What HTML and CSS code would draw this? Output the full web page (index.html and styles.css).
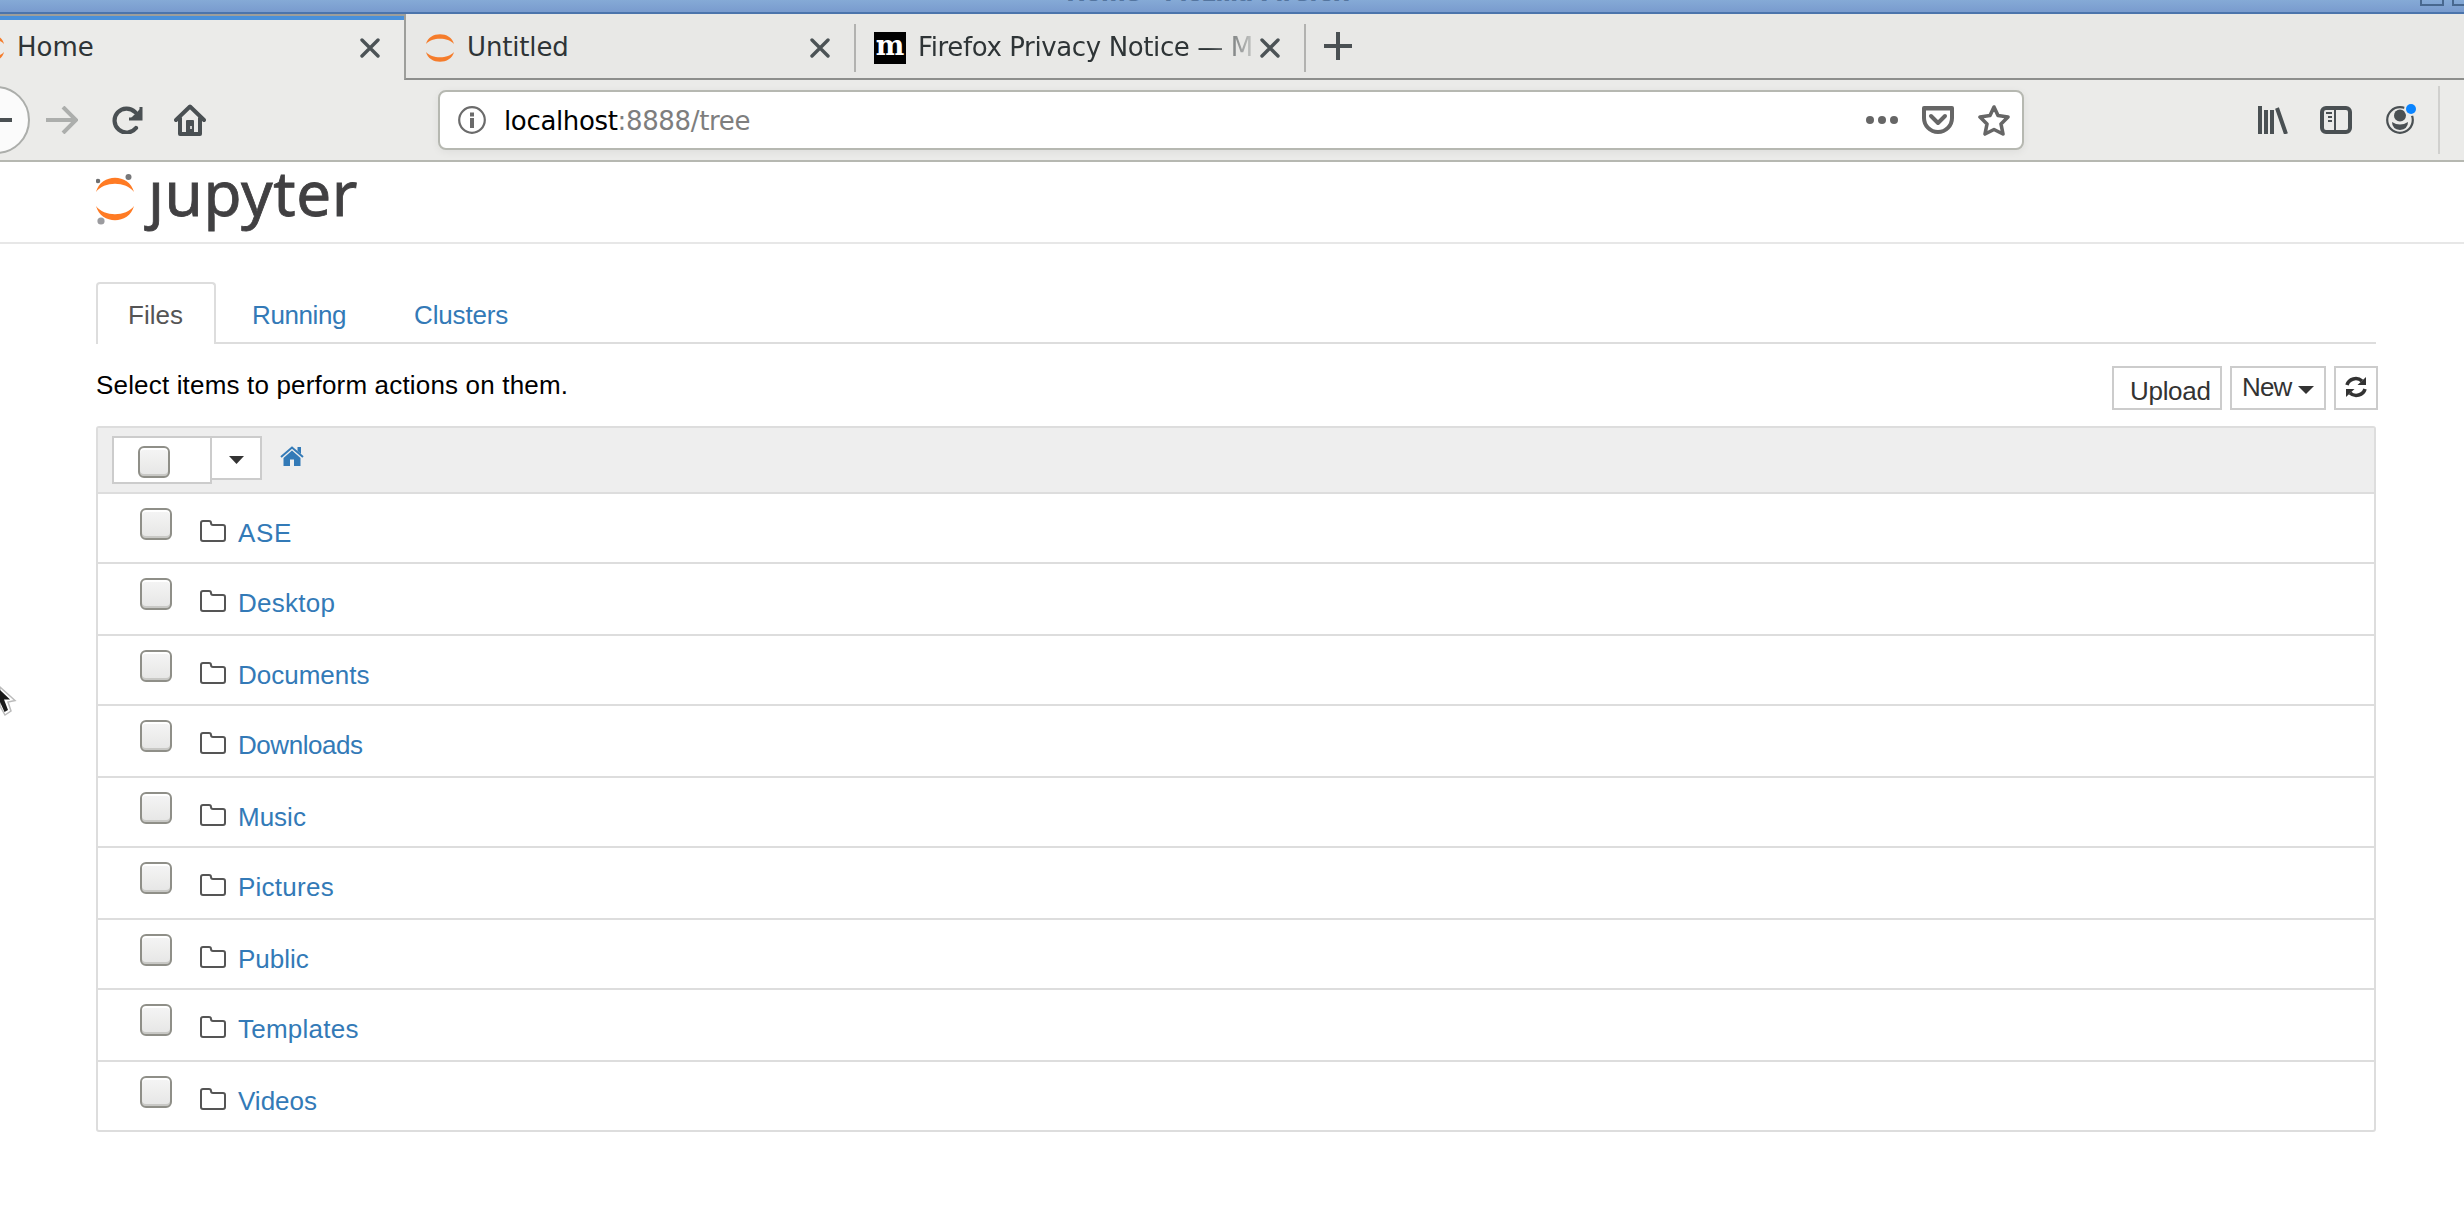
FILE: index.html
```
<!DOCTYPE html>
<html lang="en">
<head>
<meta charset="utf-8">
<title>Home</title>
<link rel="stylesheet" href="styles.css">
</head>
<body>
<svg class="defs" width="0" height="0" aria-hidden="true">
  <symbol id="close" viewBox="0 0 20 20"><path d="M2 2L18 18M18 2L2 18" fill="none" stroke="#4c5356" stroke-width="3.4" stroke-linecap="round"/></symbol>
  <symbol id="planet" viewBox="0 0 28 28"><path d="M0 10C3-3 25-3 28 10C22 3 6 3 0 10ZM0 18C3 31 25 31 28 18C22 25 6 25 0 18Z" fill="#f57c2b"/></symbol>
  <symbol id="folder" viewBox="0 0 26 22"><path d="M1 3Q1 1 3 1H9Q11 1 11 3Q11 5 13 5H23Q25 5 25 7V19Q25 21 23 21H3Q1 21 1 19Z" fill="none" stroke="#555" stroke-width="2"/></symbol>
</svg>

<header class="titlebar">
  <span class="window-title">Home - Mozilla Firefox</span>
  <span class="window-buttons"><i></i><i></i></span>
</header>

<div class="tabstrip">
  <div class="tab tab-active">
    <svg class="tab-planet" width="28" height="28"><use href="#planet"/></svg>
    <span class="tab-label home-label">Home</span>
    <svg class="tab-close" width="20" height="20"><use href="#close"/></svg>
  </div>
  <div class="tab tab-untitled">
    <svg width="28" height="28"><use href="#planet"/></svg>
    <span class="tab-label untitled-label">Untitled</span>
    <svg class="tab-close" width="20" height="20"><use href="#close"/></svg>
  </div>
  <div class="tab tab-privacy">
    <span class="moz">m</span>
    <span class="tab-label privacy-label">Firefox Privacy Notice — M</span>
    <svg class="tab-close" width="20" height="20"><use href="#close"/></svg>
  </div>
  <div class="newtab"><svg width="28" height="28" viewBox="0 0 28 28"><path d="M14 0V28M0 14H28" stroke="#4a5053" stroke-width="4"/></svg></div>
</div>

<nav class="toolbar">
  <div class="back"><svg width="32" height="28" viewBox="0 0 32 28"><path d="M32 14H3M15 2L3 14L15 26" fill="none" stroke="#4a5053" stroke-width="4"/></svg></div>
  <svg class="forward" width="32" height="28" viewBox="0 0 32 28"><path d="M0 14H29M17 1L30 14L17 27" fill="none" stroke="#acaeac" stroke-width="4"/></svg>
  <svg class="reload" width="32" height="28" viewBox="0 0 32 28"><path d="M24 22A12 12 0 1 1 23 6" fill="none" stroke="#4a5053" stroke-width="4.2" stroke-linecap="round"/><path d="M29 1V13H17" fill="none" stroke="#4a5053" stroke-width="3"/><path d="M30 1V14H17Z" fill="#4a5053"/></svg>
  <svg class="home" width="32" height="32" viewBox="0 0 32 32"><path d="M2 16L16 2.5L30 16M6 14V30H26V14" fill="none" stroke="#4a5053" stroke-width="4" stroke-linejoin="round" stroke-linecap="round"/><path d="M12 30V17Q12 16 13 16H19Q20 16 20 17V30Z" fill="#4a5053"/><path d="M16 22h2v3h-2z" fill="#ccc"/></svg>

  <div class="urlbar">
    <svg width="28" height="28" viewBox="0 0 28 28"><circle cx="14" cy="14" r="12.8" fill="none" stroke="#6b6b6b" stroke-width="2.2"/><path d="M12 6.500h4v4h-4zM12 12h4v10h-4z" fill="#6b6b6b"/></svg>
    <span class="url"><b>localhost</b><span>:8888/tree</span></span>
    <svg class="dots" width="32" height="8" viewBox="0 0 32 8"><circle cx="4" cy="4" r="4"/><circle cx="16" cy="4" r="4"/><circle cx="28" cy="4" r="4"/></svg>
    <svg class="pocket" width="32" height="28" viewBox="0 0 32 28"><path d="M2 2H30V12A14 14 0 0 1 2 12Z" fill="none" stroke="#666" stroke-width="4" stroke-linejoin="round"/><path d="M2 2.500H30" stroke="#666" stroke-width="4"/><path d="M9 10L16 17L23 10" fill="none" stroke="#666" stroke-width="4" stroke-linecap="round" stroke-linejoin="round"/></svg>
    <svg class="star" width="32" height="32" viewBox="0 0 32 32"><path d="M16 3L20 11.500L30 13L23 20L25 30L16 25.500L7 30L9 20L2 13L12 11.500Z" fill="none" stroke="#666" stroke-width="3.600" stroke-linejoin="round"/></svg>
  </div>

  <svg class="library" width="30" height="28" viewBox="0 0 30 28"><path d="M2 0V28M8 4V28M14 4V28M19 2L28 28" fill="none" stroke="#4a5053" stroke-width="4"/></svg>
  <svg class="sidebar" width="32" height="28" viewBox="0 0 32 28"><rect x="2" y="2" width="28" height="24" rx="4" fill="none" stroke="#4a5053" stroke-width="4"/><path d="M15 3V26" stroke="#4a5053" stroke-width="2"/><path d="M6 7H12M8 11H12M8 15H12" stroke="#4a5053" stroke-width="2"/></svg>
  <svg class="account" width="30" height="30" viewBox="0 0 30 30"><circle cx="14" cy="16" r="12.800" fill="none" stroke="#4a5053" stroke-width="2.200"/><ellipse cx="14" cy="11.500" rx="6" ry="6"/><path d="M6 18Q14 23 22 18Q22 25 14 26Q6 25 6 18Z"/><circle cx="25" cy="5" r="7" fill="#ebebe9"/><circle cx="25" cy="5" r="5" fill="#0a84ff"/></svg>
  <span class="toolbar-sep"></span>
</nav>

<header class="brand">
  <svg width="38" height="54" viewBox="0 0 38 54"><path d="M0 19C5 0 33 0 38 19C30 8 8 8 0 19ZM0 33C5 52 33 52 38 33C30 44 8 44 0 33Z" fill="#ff7b24"/><circle cx="2" cy="8" r="2.300" fill="#6f7071"/><circle cx="32.500" cy="4" r="3" fill="#77787a"/><circle cx="5" cy="48" r="3.600" fill="#9b9b9f"/></svg>
  <span class="wordmark">ȷupyter</span>
</header>

<main class="page">
  <nav class="page-tabs">
    <a class="page-tab current">Files</a>
    <a class="page-tab running">Running</a>
    <a class="page-tab clusters">Clusters</a>
  </nav>

  <div class="actions">
    <span class="hint">Select items to perform actions on them.</span>
    <div class="buttons">
      <button class="btn upload">Upload</button>
      <button class="btn new">New<svg width="16" height="8" viewBox="0 0 16 8"><path d="M0 0H16L8 8Z" fill="#333"/></svg></button>
      <button class="btn refresh"><svg width="22" height="22" viewBox="0 0 22 22"><path d="M2 9A9 8.500 0 0 1 17 5M20 13A9 8.500 0 0 1 5 17" fill="none" stroke="#333" stroke-width="3.600"/><path d="M21 1V9H12.500ZM1 21V13H9.500Z" fill="#333"/></svg></button>
    </div>
  </div>

  <section class="list">
    <div class="list-head">
      <div class="select-all"><input type="checkbox" class="check"></div>
      <button class="select-menu"><svg width="15" height="8" viewBox="0 0 15 8"><path d="M0 0H15L7.500 8Z" fill="#333"/></svg></button>
      <svg class="crumb" width="24" height="20" viewBox="0 0 24 20"><path d="M12 4.500L20.500 12V20H14V13.500H10V20H3.500V12Z" fill="#337ab7"/><path d="M1 11L12 1.500L23 11" fill="none" stroke="#337ab7" stroke-width="2"/><path d="M17.500 1H21V8L17.500 5Z" fill="#337ab7"/></svg>
    </div>
    <div class="row"><input type="checkbox" class="check"><svg class="folder" width="26" height="22"><use href="#folder"/></svg><a class="wide">ASE</a></div>
    <div class="row"><input type="checkbox" class="check"><svg class="folder" width="26" height="22"><use href="#folder"/></svg><a class="loose">Desktop</a></div>
    <div class="row"><input type="checkbox" class="check"><svg class="folder" width="26" height="22"><use href="#folder"/></svg><a>Documents</a></div>
    <div class="row"><input type="checkbox" class="check"><svg class="folder" width="26" height="22"><use href="#folder"/></svg><a class="tight">Downloads</a></div>
    <div class="row"><input type="checkbox" class="check"><svg class="folder" width="26" height="22"><use href="#folder"/></svg><a>Music</a></div>
    <div class="row"><input type="checkbox" class="check"><svg class="folder" width="26" height="22"><use href="#folder"/></svg><a class="loose">Pictures</a></div>
    <div class="row"><input type="checkbox" class="check"><svg class="folder" width="26" height="22"><use href="#folder"/></svg><a>Public</a></div>
    <div class="row"><input type="checkbox" class="check"><svg class="folder" width="26" height="22"><use href="#folder"/></svg><a class="loose">Templates</a></div>
    <div class="row"><input type="checkbox" class="check"><svg class="folder" width="26" height="22"><use href="#folder"/></svg><a>Videos</a></div>
  </section>
</main>

<svg class="pointer" width="18" height="34" viewBox="0 0 18 34"><path d="M0 2L15 15.500L8 17L11 26L5 30L0 21Z" fill="#fff" stroke="#bbb" stroke-width="1.500"/><path d="M0 5L10 14.500H4L8 25L4.500 27L0 17Z" fill="#1a1a1a"/></svg>
</body>
</html>
```
FILE: styles.css
```
* { box-sizing: border-box; }
body {
  margin: 0;
  width: 2464px;
  height: 1220px;
  overflow: hidden;
  position: relative;
  background: #fff;
  color: #000;
  font: 26px/36px "Liberation Sans", Arial, sans-serif;
}
svg { display: block; flex: none; }
.defs { position: absolute; }

/* window title */
.titlebar {
  height: 14px;
  position: relative;
  overflow: hidden;
  background: linear-gradient(#85aad6, #799bce);
  border-bottom: 2px solid #4b74ac;
}
.window-title {
  position: absolute;
  left: 1066px;
  top: -24px;
  font: bold 24px/34px "DejaVu Sans", sans-serif;
  letter-spacing: -0.95px;
  white-space: nowrap;
  color: #54759f;
}
.window-buttons {
  position: absolute;
  left: 2420px;
  top: -18px;
  display: flex;
  gap: 8px;
}
.window-buttons i { width: 24px; height: 24px; border: 2px solid #48688f; flex: none; }

/* browser tabs */
.tabstrip {
  height: 66px;
  display: flex;
  background: #e8e8e6;
  font: 26px/40px "DejaVu Sans", sans-serif;
  color: #2e3436;
}
.tab {
  display: flex;
  align-items: flex-start;
  border-bottom: 2px solid #8d8e8c;
  position: relative;
}
.tab > svg { margin-top: 20px; }
.tab .tab-close { margin: 24px 0 0 auto; }
.tab-label { margin-top: 13px; white-space: pre; }
.tab-active {
  width: 404px;
  background: #ebebe9;
  border-top: 2px solid #9d9e9b;
  border-bottom: 0;
  box-shadow: inset 0 4px #4a90d9;
  padding-right: 24px;
}
.tab-active > .tab-planet { margin: 18px 0 0 -24px; }
.tab-active .tab-close { margin-top: 22px; }
.tab-active .tab-label { margin: 11px 0 0 13px; }
.tab-untitled { width: 450px; padding: 0 24px 0 20px; border-left: 2px solid #9d9e9b; }
.untitled-label { margin-left: 13px; letter-spacing: -.15px; }
.tab-privacy { width: 450px; padding: 0 24px 0 20px; }
.tab-privacy::before, .newtab::before {
  content: "";
  width: 2px;
  height: 48px;
  position: absolute;
  left: 0;
  top: 10px;
  background: #b2b2b0;
}
.moz {
  width: 32px;
  height: 32px;
  margin-top: 18px;
  background: #000;
  color: #fff;
  font: bold 27px/27px "DejaVu Serif", serif;
  text-align: center;
}
.privacy-label {
  margin-left: 12px;
  width: 337px;
  flex: none;
  letter-spacing: -.38px;
  -webkit-mask-image: linear-gradient(90deg, #000 290px, transparent 345px);
  mask-image: linear-gradient(90deg, #000 290px, transparent 345px);
}
.newtab {
  flex: 1;
  position: relative;
  padding: 18px 0 0 20px;
  border-bottom: 2px solid #8d8e8c;
}

/* navigation toolbar */
.toolbar {
  height: 82px;
  display: flex;
  align-items: center;
  background: #ebebe9;
  border-bottom: 2px solid #b6b8b1;
  fill: #4a5053;
}
.back {
  width: 68px;
  height: 68px;
  margin-left: -38px;
  border: 2px solid #acaeab;
  border-radius: 50%;
  background: #fbfbfb;
  display: grid;
  place-items: center;
}
.forward { margin-left: 16px; }
.reload { margin-left: 34px; }
.home { margin-left: 30px; }
.urlbar {
  width: 1586px;
  height: 60px;
  margin-left: 232px;
  display: flex;
  align-items: center;
  padding: 0 12px 0 18px;
  background: #fff;
  border: 2px solid #b6b8b1;
  border-radius: 8px;
  box-shadow: 0 2px 8px rgba(0, 0, 0, .06);
  fill: #666;
}
.url { margin: 2px 0 0 18px; font: 26px/40px "DejaVu Sans", sans-serif; letter-spacing: -.35px; color: #7e7e7e; }
.url b { font-weight: 400; color: #000; }
.dots { margin-left: auto; }
.pocket { margin-left: 24px; }
.star { margin-left: 24px; }
.library { margin-left: 234px; }
.sidebar { margin-left: 32px; }
.account { margin: -2px 0 0 34px; }
.toolbar-sep { width: 2px; height: 68px; margin-left: 22px; background: #d0d0ce; }

/* notebook header */
.brand {
  height: 82px;
  display: flex;
  padding: 11px 0 0 96px;
  border-bottom: 2px solid #e7e7e7;
}
.wordmark {
  margin: -22px 0 0 14px;
  font: 62px/82px "Noto Sans", sans-serif;
  letter-spacing: .6px;
  -webkit-text-stroke: .8px #414042;
  color: #414042;
}

/* notebook page */
.page { padding: 38px 88px 0 96px; }
.page-tabs {
  width: 2280px;
  height: 62px;
  display: flex;
  box-shadow: inset 0 -2px #ddd;
  color: #337ab7;
}
.page-tab { padding-top: 15px; }
.page-tab.current {
  width: 120px;
  padding: 13px 0 0 30px;
  background: #fff;
  border: 2px solid #ddd;
  border-bottom: 0;
  border-radius: 4px 4px 0 0;
  color: #555;
}
.running { width: 160px; padding-left: 36px; letter-spacing: -.4px; }
.clusters { padding-left: 38px; letter-spacing: -.15px; }

.actions { width: 2280px; height: 82px; display: flex; align-items: flex-start; }
.hint { margin-top: 23px; white-space: nowrap; letter-spacing: .17px; }
.buttons { display: flex; gap: 8px; margin: 22px -2px 0 auto; }
.btn {
  height: 44px;
  padding: 0;
  border: 2px solid #ccc;
  background: #fff;
  color: #333;
  font: 26px/36px "Liberation Sans", Arial, sans-serif;
  display: flex;
  align-items: flex-start;
}
.upload { width: 110px; padding: 5px 0 0 16px; letter-spacing: -.3px; }
.new { width: 96px; padding: 1px 0 0 10px; letter-spacing: -.9px; }
.new svg { margin: 17px 0 0 7px; }
.refresh { width: 44px; padding: 8px 0 0 9px; }

/* file list */
.list { width: 2280px; border: 2px solid #ddd; border-radius: 3px; }
.list-head {
  height: 66px;
  display: flex;
  align-items: flex-start;
  padding: 8px 0 0 14px;
  background: #eee;
  border-bottom: 2px solid #ddd;
}
.select-all { width: 100px; height: 48px; padding: 8px 0 0 24px; background: #fff; border: 2px solid #ccc; }
.select-menu {
  width: 52px;
  height: 44px;
  margin-left: -2px;
  padding: 4px 0 0;
  display: grid;
  place-items: center;
  background: #fff;
  border: 2px solid #ccc;
}
.crumb { margin: 10px 0 0 18px; }
.check {
  appearance: none;
  display: block;
  flex: none;
  width: 32px;
  height: 32px;
  margin: 0;
  border: 2px solid #8f8f88;
  border-radius: 6px;
  background: linear-gradient(#f5f5f5, #e6e6e5);
  box-shadow: inset 0 2px #fff, inset 0 -2px #c8c8c5;
}
.row {
  height: 70px;
  display: flex;
  align-items: flex-start;
  padding: 14px 0 0 42px;
  border-bottom: 2px solid #ddd;
  color: #337ab7;
}
.row:nth-child(odd) { height: 72px; }
.row:last-child { height: 68px; border-bottom: 0; }
.folder { margin: 12px 0 0 28px; }
.row a { margin: 7px 0 0 12px; }
.row .wide { letter-spacing: .6px; }
.row .loose { letter-spacing: .25px; }
.row .tight { letter-spacing: -.45px; }

.pointer { position: absolute; left: 0; top: 685px; }
```
